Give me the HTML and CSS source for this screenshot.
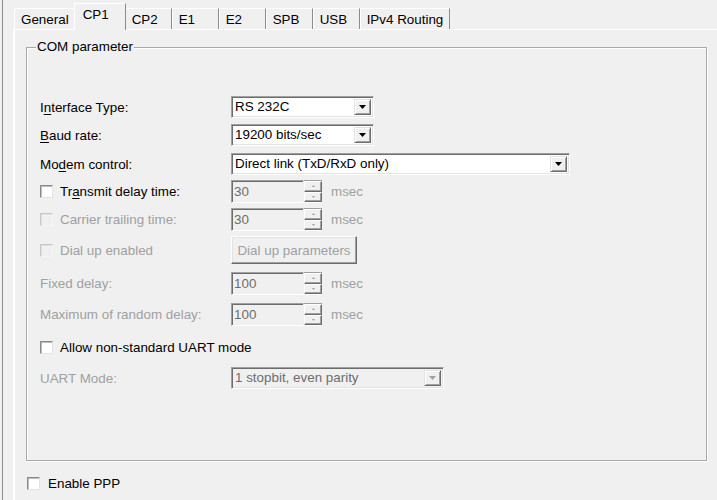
FILE: index.html
```html
<!DOCTYPE html>
<html>
<head>
<meta charset="utf-8">
<link rel="stylesheet" href="styles.css">
</head>
<body>
<div class="window">
  <div class="tabs">
    <div class="tab">General</div>
    <div class="tab sel">CP1</div>
    <div class="tab">CP2</div>
    <div class="tab">E1</div>
    <div class="tab">E2</div>
    <div class="tab">SPB</div>
    <div class="tab">USB</div>
    <div class="tab">IPv4 Routing</div>
  </div>
  <div class="panel">
    <div class="group">
      <div class="legend">COM parameter</div>

      <div class="row mt48">
        <div class="lbl">I<u>n</u>terface Type:</div>
        <div class="combo w143">
          <div class="combo-text">RS 232C</div>
          <div class="combo-btn"><svg width="7" height="4" viewBox="0 0 7 4"><path d="M0 0h7L3.5 4z" fill="#000"/></svg></div>
        </div>
      </div>

      <div class="row mt6">
        <div class="lbl"><u>B</u>aud rate:</div>
        <div class="combo w143">
          <div class="combo-text">19200 bits/sec</div>
          <div class="combo-btn"><svg width="7" height="4" viewBox="0 0 7 4"><path d="M0 0h7L3.5 4z" fill="#000"/></svg></div>
        </div>
      </div>

      <div class="row mt7">
        <div class="lbl">Mo<u>d</u>em control:</div>
        <div class="combo w339">
          <div class="combo-text">Direct link (TxD/RxD only)</div>
          <div class="combo-btn"><svg width="7" height="4" viewBox="0 0 7 4"><path d="M0 0h7L3.5 4z" fill="#000"/></svg></div>
        </div>
      </div>

      <div class="row h23 mt5">
        <div class="lbl"><span class="chk"></span>Tr<u>a</u>nsmit delay time:</div>
        <div class="spin">
          <div class="spin-field">30</div>
          <div class="spin-btns">
            <div class="spin-b"><svg width="3" height="2" viewBox="0 0 3 2"><path d="M0 2h3L1.5 0z" fill="#a0a0a0"/></svg></div>
            <div class="spin-b"><svg width="3" height="2" viewBox="0 0 3 2"><path d="M0 0h3L1.5 2z" fill="#a0a0a0"/></svg></div>
          </div>
        </div>
        <div class="unit">msec</div>
      </div>

      <div class="row h23 mt5">
        <div class="lbl dis"><span class="chk off"></span>Carrier trailing time:</div>
        <div class="spin">
          <div class="spin-field">30</div>
          <div class="spin-btns">
            <div class="spin-b"><svg width="3" height="2" viewBox="0 0 3 2"><path d="M0 2h3L1.5 0z" fill="#a0a0a0"/></svg></div>
            <div class="spin-b"><svg width="3" height="2" viewBox="0 0 3 2"><path d="M0 0h3L1.5 2z" fill="#a0a0a0"/></svg></div>
          </div>
        </div>
        <div class="unit">msec</div>
      </div>

      <div class="row h28 mt5">
        <div class="lbl dis"><span class="chk off"></span>Dial up enabled</div>
        <div class="btn">Dial up parameters</div>
      </div>

      <div class="row h23 mt8">
        <div class="lbl dis">Fixed delay:</div>
        <div class="spin">
          <div class="spin-field">100</div>
          <div class="spin-btns">
            <div class="spin-b"><svg width="3" height="2" viewBox="0 0 3 2"><path d="M0 2h3L1.5 0z" fill="#a0a0a0"/></svg></div>
            <div class="spin-b"><svg width="3" height="2" viewBox="0 0 3 2"><path d="M0 0h3L1.5 2z" fill="#a0a0a0"/></svg></div>
          </div>
        </div>
        <div class="unit">msec</div>
      </div>

      <div class="row h23 mt8">
        <div class="lbl dis">Maximum of random delay:</div>
        <div class="spin">
          <div class="spin-field">100</div>
          <div class="spin-btns">
            <div class="spin-b"><svg width="3" height="2" viewBox="0 0 3 2"><path d="M0 2h3L1.5 0z" fill="#a0a0a0"/></svg></div>
            <div class="spin-b"><svg width="3" height="2" viewBox="0 0 3 2"><path d="M0 0h3L1.5 2z" fill="#a0a0a0"/></svg></div>
          </div>
        </div>
        <div class="unit">msec</div>
      </div>

      <div class="row h20 mt11">
        <div class="lbl wide"><span class="chk"></span>Allow non-standard UART mode</div>
      </div>

      <div class="row mt10">
        <div class="lbl dis">UART Mode:</div>
        <div class="combo w212 disabled">
          <div class="combo-text">1 stopbit, even parity</div>
          <div class="combo-btn"><svg width="7" height="4" viewBox="0 0 7 4"><path d="M0 0h7L3.5 4z" fill="#a0a0a0"/></svg></div>
        </div>
      </div>
    </div>

    <div class="ppp"><span class="chk"></span>Enable PPP</div>
  </div>
</div>
</body>
</html>
```

FILE: styles.css
```css
html, body {
  margin: 0;
  padding: 0;
}

body {
  background: #f0f0f0;
  font: 13.4px "Liberation Sans", Arial, sans-serif;
  color: #000;
  overflow: hidden;
  width: 717px;
  height: 500px;
}

.window {
  margin-left: 2px;
  border-left: 1px solid #8c8c8c;
  height: 500px;
  padding-left: 10px;
}

/* tabs */
.tabs {
  display: flex;
  align-items: flex-end;
  height: 29px;
  padding-left: 1px;
}

.tab {
  box-sizing: border-box;
  height: 21px;
  min-width: 47px;
  padding: 2px 6px 0 6px;
  border-top: 1px solid #fff;
  border-left: 1px solid #fff;
  border-right: 1px solid #8c8c8c;
  line-height: 17px;
  white-space: nowrap;
}

.tab.sel {
  height: 27px;
  margin: 0 -1px -1px -2px;
  padding: 0 8px 0 8px;
  line-height: 22px;
  background: #f0f0f0;
  position: relative;
  z-index: 1;
  min-width: 52px;
}

.panel {
  border-top: 1px solid #fff;
  border-left: 1px solid #fff;
  box-shadow: inset 1px 0 0 #fff;
  height: 470px;
  display: flex;
  flex-direction: column;
}

/* group box */
.group {
  position: relative;
  box-sizing: border-box;
  margin: 17px 0 0 12px;
  width: 681px;
  height: 414px;
  border: 1px solid #a9a9a9;
  box-shadow: inset 1px 1px 0 #fff, 1px 1px 0 #fff;
  padding-left: 13px;
  display: flex;
  flex-direction: column;
}

.legend {
  position: absolute;
  left: 9px;
  top: -9px;
  padding: 0 1px;
  background: #f0f0f0;
  line-height: 16px;
}

.row {
  display: flex;
  align-items: center;
  height: 22px;
}

.h20 { height: 20px; }
.h23 { height: 23px; }
.h28 { height: 28px; }

.mt5 { margin-top: 5px; }
.mt6 { margin-top: 6px; }
.mt7 { margin-top: 7px; }
.mt8 { margin-top: 8px; }
.mt10 { margin-top: 10px; }
.mt11 { margin-top: 11px; }
.mt48 { margin-top: 48px; }

.lbl {
  width: 191px;
  flex: none;
  display: flex;
  align-items: center;
  white-space: nowrap;
}

.lbl.wide { width: auto; }

.dis { color: #a0a0a0; }

u { text-decoration: underline; text-underline-offset: 2px; }

/* checkbox */
.chk {
  box-sizing: border-box;
  width: 13px;
  height: 13px;
  flex: none;
  margin-right: 7px;
  background: #fff;
  border: 1px solid;
  border-color: #8a8a8a #e3e3e3 #e3e3e3 #8a8a8a;
  box-shadow: inset 1px 1px 0 #bdbdbd;
}

.chk.off {
  background: #f0f0f0;
  border-color: #c8c8c8 #f4f4f4 #f4f4f4 #c8c8c8;
  box-shadow: inset 1px 1px 0 #e0e0e0;
}

/* combo box */
.combo {
  box-sizing: border-box;
  height: 22px;
  display: flex;
  background: #fff;
  border: 1px solid;
  border-color: #a0a0a0 #fff #fff #a0a0a0;
  box-shadow: inset 1px 1px 0 #6d6d6d, inset -1px -1px 0 #e3e3e3;
  padding: 2px;
}

.w143 { width: 143px; }
.w339 { width: 339px; }
.w212 { width: 213px; }

.combo-text {
  flex: 1;
  line-height: 16px;
  padding-left: 1px;
  white-space: nowrap;
  overflow: hidden;
}

.combo.disabled {
  background: #f0f0f0;
}

.combo.disabled .combo-text { color: #6d6d6d; }

.combo-btn {
  box-sizing: border-box;
  width: 17px;
  height: 16px;
  flex: none;
  display: flex;
  align-items: center;
  justify-content: center;
  background: #f0f0f0;
  border: 1px solid;
  border-color: #e3e3e3 #6d6d6d #6d6d6d #e3e3e3;
  box-shadow: inset 1px 1px 0 #fff, inset -1px -1px 0 #a0a0a0;
}

/* spinner */
.spin {
  display: flex;
  width: 91px;
  height: 23px;
  flex: none;
}

.spin-field {
  box-sizing: border-box;
  flex: 1;
  height: 23px;
  border: 1px solid;
  border-color: #a0a0a0 #f0f0f0 #fff #a0a0a0;
  box-shadow: inset 1px 1px 0 #6d6d6d;
  padding: 2px 0 0 2px;
  line-height: 17px;
  color: #6d6d6d;
}

.spin-btns {
  width: 18px;
  height: 23px;
  display: flex;
  flex-direction: column;
  box-sizing: border-box;
  border-top: 1px solid #a0a0a0;
  border-bottom: 1px solid #fff;
}

.spin-b {
  flex: 1;
  box-sizing: border-box;
  display: flex;
  align-items: center;
  justify-content: center;
  border: 1px solid;
  border-color: #fff #6d6d6d #6d6d6d #fff;
  box-shadow: inset -1px -1px 0 #a0a0a0;
  background: #f0f0f0;
}

.unit {
  margin-left: 9px;
  color: #a0a0a0;
}

/* push button */
.btn {
  box-sizing: border-box;
  width: 126px;
  height: 28px;
  display: flex;
  align-items: center;
  justify-content: center;
  color: #a0a0a0;
  background: #f0f0f0;
  border: 1px solid;
  border-color: #fff #6d6d6d #6d6d6d #fff;
  box-shadow: inset -1px -1px 0 #a0a0a0, inset 1px 1px 0 #e3e3e3;
}

/* PPP */
.ppp {
  display: flex;
  align-items: center;
  height: 20px;
  margin: 12px 0 0 13px;
}

.ppp .chk { margin-right: 8px; }
```
